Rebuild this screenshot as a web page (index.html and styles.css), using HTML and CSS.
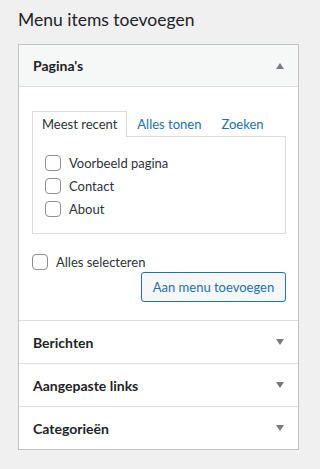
FILE: index.html
```html
<!DOCTYPE html>
<html lang="nl">
<head>
<meta charset="utf-8">
<title>Menu items toevoegen</title>
<link rel="stylesheet" href="styles.css">
</head>
<body>
<div class="page">
  <h2 class="title">Menu items toevoegen</h2>
  <div class="panel">
    <div class="section open">
      <div class="section-head head-open">
        <h3>Pagina's</h3>
        <span class="arrow up"></span>
      </div>
      <div class="section-body">
        <div class="tabs">
          <span class="tab active">Meest recent</span>
          <span class="tab">Alles tonen</span>
          <span class="tab">Zoeken</span>
        </div>
        <div class="tab-panel">
          <label class="check-row"><span class="checkbox"></span>Voorbeeld pagina</label>
          <label class="check-row"><span class="checkbox"></span>Contact</label>
          <label class="check-row"><span class="checkbox"></span>About</label>
        </div>
        <label class="check-row select-all"><span class="checkbox"></span>Alles selecteren</label>
        <div class="actions">
          <button class="button">Aan menu toevoegen</button>
        </div>
      </div>
    </div>
    <div class="section">
      <div class="section-head"><h3>Berichten</h3><span class="arrow down"></span></div>
    </div>
    <div class="section">
      <div class="section-head"><h3>Aangepaste links</h3><span class="arrow down"></span></div>
    </div>
    <div class="section">
      <div class="section-head"><h3>Categorieën</h3><span class="arrow down"></span></div>
    </div>
  </div>
</div>
</body>
</html>
```

FILE: styles.css
```css
* { box-sizing: border-box; }
html, body { margin: 0; padding: 0; }
body {
  background: #f0f0f1;
  font-family: "Lato", "Noto Sans", sans-serif;
  color: #1d2327;
  font-size: 13px;
}
.page {
  padding: 9px 18px 0 18px;
}
.title {
  margin: 0 0 13px 0;
  font-size: 17.5px;
  font-weight: 400;
  line-height: 22px;
  color: #1d2327;
  white-space: nowrap;
}
.panel {
  width: 281px;
  background: #fff;
  border: 1px solid #c3c4c7;
  box-shadow: 0 1px 1px rgba(0,0,0,0.04);
}
.section + .section { border-top: 1px solid #dcdcde; }
.section-head {
  height: 42px;
  display: flex;
  align-items: center;
  justify-content: space-between;
  padding: 0 14px;
}
.head-open {
  background: #f6f7f7;
  border-bottom: 1px solid #dcdcde;
}
.section-head h3 {
  margin: 0;
  font-size: 14px;
  font-weight: 700;
  color: #1d2327;
  white-space: nowrap;
}
.arrow {
  width: 0; height: 0;
  border-left: 4px solid transparent;
  border-right: 4px solid transparent;
}
.arrow.up { border-bottom: 6px solid #787c82; }
.arrow.down { border-top: 6px solid #787c82; }
.section-body {
  padding: 24px 12px 18px 13px;
}
.tabs {
  display: flex;
  height: 25px;
  align-items: stretch;
}
.tab {
  padding: 0 9px;
  line-height: 24px;
  color: #2271b1;
  font-size: 13px;
  border: 1px solid transparent;
  border-bottom: none;
  position: relative;
  white-space: nowrap;
}
.tab.active {
  color: #2c3338;
  background: #fff;
  border-color: #dcdcde;
  z-index: 1;
  height: 26px;
}
.tab-panel {
  border: 1px solid #dcdcde;
  padding: 18px 12px 16px 12px;
  display: flex;
  flex-direction: column;
  gap: 7px;
}
.check-row {
  display: flex;
  align-items: center;
  gap: 8px;
  color: #2c3338;
  font-size: 13px;
  line-height: 16px;
  white-space: nowrap;
}
.checkbox {
  width: 16px; height: 16px;
  border: 1px solid #8c8f94;
  border-radius: 4px;
  background: #fff;
  flex: none;
}
.select-all { margin-top: 20px; }
.actions {
  display: flex;
  justify-content: flex-end;
  margin-top: 2px;
}
.button {
  font-family: inherit;
  font-size: 13px;
  color: #2271b1;
  background: #f6f7f7;
  border: 1px solid #2271b1;
  border-radius: 3px;
  height: 30px;
  padding: 0 10px;
  width: 145px;
  white-space: nowrap;
  cursor: pointer;
}
```
